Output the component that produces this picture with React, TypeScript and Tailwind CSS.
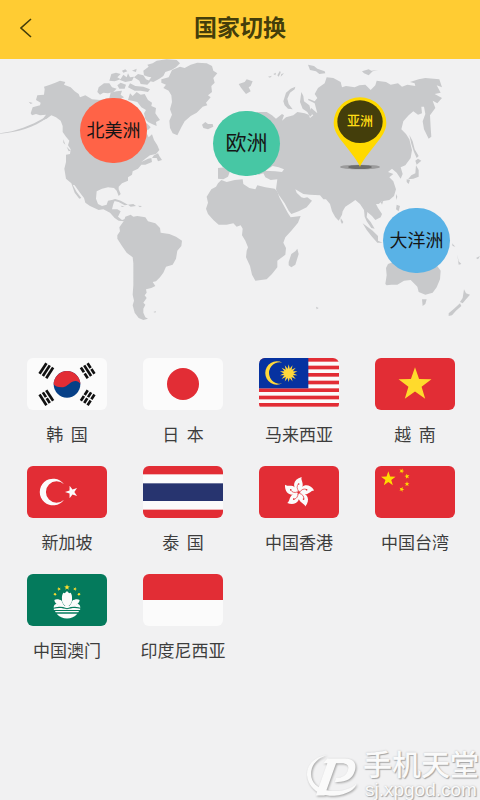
import type { ReactNode } from "react";

const FONT = "font-['Noto_Sans_CJK_SC','Noto_Sans',sans-serif]";
const RED = "#e22d35";
const STAR =
  "M0,-10 L2.35,-3.24 L9.51,-3.09 L3.8,1.24 L5.88,8.09 L0,4 L-5.88,8.09 L-3.8,1.24 L-9.51,-3.09 L-2.35,-3.24Z";

function Star({ x, y, r, fill, turn = 0 }: { x: number; y: number; r: number; fill: string; turn?: number }) {
  return <path d={STAR} fill={fill} transform={`translate(${x} ${y}) rotate(${turn}) scale(${r / 10})`} />;
}

function Trigram({ x, y, turn, broken }: { x: number; y: number; turn: number; broken: boolean[] }) {
  return (
    <g transform={`translate(${x} ${y}) rotate(${turn})`} stroke="#111" strokeWidth="8">
      {broken.map((b, i) => (
        <path key={i} d={b ? `M-19,${i * 12 - 12} H-2 M2,${i * 12 - 12} H19` : `M-19,${i * 12 - 12} H19`} />
      ))}
    </g>
  );
}

function Flag({ children }: { children: ReactNode }) {
  return (
    <svg viewBox="0 0 240 156" className="h-[52px] w-20 rounded-md" aria-hidden="true">
      {children}
    </svg>
  );
}

const korea = (
  <>
    <rect width="240" height="156" fill="#fbfbfb" />
    <circle cx="120" cy="79" r="40" fill="#064087" />
    <path d="M80,79 A40,40 0 0 1 160,79 C158,70 146,66 136,71 C124,77 118,88 104,88 C92,88 84,84 80,79Z" fill={RED} />
    <Trigram x={58} y={38} turn={-57} broken={[false, false, false]} />
    <Trigram x={182} y={38} turn={57} broken={[true, false, true]} />
    <Trigram x={58} y={119} turn={57} broken={[false, true, false]} />
    <Trigram x={182} y={119} turn={-57} broken={[true, true, true]} />
  </>
);

const japan = (
  <>
    <rect width="240" height="156" fill="#fbfbfb" />
    <circle cx="120" cy="78" r="48" fill={RED} />
  </>
);

const malaysia = (
  <>
    <rect width="240" height="146" fill="#fbfbfb" />
    {[0, 23, 45, 68, 91, 113, 135].map((y) => (
      <rect key={y} y={y} width="240" height="11" fill={RED} />
    ))}
    <rect width="148" height="91" fill="#0632a0" />
    <path d="M70,14 A35,35 0 1 0 70,76 A32,32 0 1 1 70,14Z" fill="#ffd83b" />
    <g transform="translate(89 46)" fill="#ffd83b">
      <circle r="14" />
      {Array.from({ length: 14 }, (_, i) => (
        <path key={i} d="M-4,-10 L0,-27 L4,-10Z" transform={`rotate(${(i * 360) / 14})`} />
      ))}
    </g>
  </>
);

const vietnam = (
  <>
    <rect width="240" height="156" fill={RED} />
    <Star x={120} y={80} r={52} fill="#ffda2c" />
  </>
);

const crescent = (
  <>
    <rect width="240" height="156" fill={RED} />
    <path d="M111,55 A40,40 0 1 0 111,101 A32,32 0 1 1 111,55Z" fill="#fbfbfb" />
    <Star x={134} y={78} r={20} fill="#fbfbfb" turn={-18} />
  </>
);

const thailand = (
  <>
    <rect width="240" height="156" fill={RED} />
    <rect y="25" width="240" height="106" fill="#fbfbfb" />
    <rect y="52" width="240" height="53" fill="#27346f" />
  </>
);

const hongkong = (
  <>
    <rect width="240" height="156" fill={RED} />
    {[0, 72, 144, 216, 288].map((a) => (
      <g key={a} transform={`translate(119 79) rotate(${a})`}>
        <path d="M0,-3 C-20,-12 -19,-39 9,-46 C5,-37 17,-27 10,-13 C8,-8 4,-4 0,-3Z" fill="#fbfbfb" />
        <path d="M0,-4 C-6,-11 -6,-19 -1,-25" fill="none" stroke={RED} strokeWidth="2" />
        <circle cx="0" cy="-25" r="2.5" fill={RED} />
      </g>
    ))}
  </>
);

const china = (
  <>
    <rect width="240" height="156" fill={RED} />
    <Star x={40} y={39} r={23} fill="#ffdc00" />
    <Star x={80} y={15} r={8} fill="#ffdc00" turn={20} />
    <Star x={96} y={31} r={8} fill="#ffdc00" turn={-10} />
    <Star x={96} y={54} r={8} fill="#ffdc00" />
    <Star x={80} y={70} r={8} fill="#ffdc00" turn={20} />
  </>
);

const macau = (
  <>
    <rect width="240" height="156" fill="#047a5c" />
    <Star x={120} y={40} r={9} fill="#ffdf2e" />
    <Star x={96} y={45} r={6} fill="#ffdf2e" turn={-20} />
    <Star x={144} y={45} r={6} fill="#ffdf2e" turn={20} />
    <Star x={84} y={61} r={6} fill="#ffdf2e" turn={-40} />
    <Star x={156} y={61} r={6} fill="#ffdf2e" turn={40} />
    <g fill="#fbfbfb">
      <path d="M120,100 C108,92 104,84 105,76 C104,68 106,60 109,56 L114,58 C116,54 118,53 120,52 C122,53 124,54 126,58 L131,56 C134,60 136,68 135,76 C136,84 132,92 120,100Z" />
      <path d="M117,100 C100,98 84,92 82,78 C88,74 98,76 104,80 C106,88 112,96 117,100Z M123,100 C140,98 156,92 158,78 C152,74 142,76 136,80 C134,88 128,96 123,100Z" />
      <path d="M80,101 C80,94 84,89 90,90 C98,98 142,98 150,90 C156,89 160,94 160,101 C140,96 130,98 120,103 C110,98 100,96 80,101Z" />
      <path d="M80,104 C96,100 108,102 120,106 C132,102 144,100 160,104 L159,108 H81Z" />
      <path d="M84,111 H156 L154,115 H86Z M89,119 H151 A40,40 0 0 1 89,119Z" />
    </g>
  </>
);

const indonesia = (
  <>
    <rect width="240" height="156" fill="#fbfbfb" />
    <rect width="240" height="78" fill={RED} />
  </>
);

const countries: { name: string; flag: ReactNode }[] = [
  { name: "韩  国", flag: korea },
  { name: "日  本", flag: japan },
  { name: "马来西亚", flag: malaysia },
  { name: "越  南", flag: vietnam },
  { name: "新加坡", flag: crescent },
  { name: "泰  国", flag: thailand },
  { name: "中国香港", flag: hongkong },
  { name: "中国台湾", flag: china },
  { name: "中国澳门", flag: macau },
  { name: "印度尼西亚", flag: indonesia },
];

function WorldMap() {
  return (
    <svg viewBox="0 177 1440 843" className="block w-full" aria-hidden="true">
      <g fill="#c8c9cb">
        {/* North America */}
        <path d="M92,340 L98,322 L120,316 L122,308 L108,300 L112,286 L132,284 L134,268 L132,260 L150,254 L166,248 L180,242 L196,246 L192,254 L212,262 L224,274 L236,282 L240,292 L256,286 L276,298 L300,300 L340,292 L440,400 L446,412 L456,403 L462,420 L472,436 L478,450 L468,462 L450,466 L436,476 L424,486 L444,476 L454,474 L456,486 L436,494 L424,494 L414,506 L398,514 L396,524 L384,532 L384,542 L366,550 L356,560 L356,568 L362,582 L356,588 L350,572 L342,564 L324,562 L306,566 L290,574 L288,596 L294,612 L306,618 L320,614 L324,602 L346,598 L340,612 L336,628 L352,628 L362,634 L354,650 L366,660 L378,656 L372,664 L356,662 L344,654 L330,638 L310,628 L296,630 L270,618 L256,608 L252,594 L240,578 L224,556 L218,554 L230,576 L244,594 L238,596 L224,578 L214,550 L198,536 L193,506 L198,486 L198,464 L210,462 L212,448 L204,436 L208,422 L198,410 L188,396 L188,378 L182,362 L168,352 L154,346 L140,356 L124,362 L138,344 L120,346 L108,342 L96,346Z" />
        <path d="M0,400 C50,394 90,378 136,352 L140,354 C104,382 50,398 0,401Z M86,305 L98,309 L92,312Z M190,418 L196,434 L190,428Z M200,440 L212,452 L206,454Z M462,466 L474,460 L478,468 L486,480 L474,484 L470,474 L456,474Z" />
        {/* Arctic islands */}
        <path d="M292,276 L296,262 L312,250 L328,250 L336,262 L350,266 L340,276 L324,280 L310,278 L300,284Z M328,294 L332,278 L350,274 L366,272 L362,284 L372,292 L360,298Z M328,242 L334,222 L348,218 L362,222 L352,232 L362,238 L344,244Z M360,240 L370,224 L380,232 L384,220 L390,232 L402,230 L396,242 L376,246Z M352,256 L362,248 L378,254 L374,266 L358,266Z M384,262 L390,250 L406,258 L430,260 L450,268 L444,276 L422,272 L404,272Z M396,212 L410,206 L408,216Z M402,232 L414,222 L430,226 L438,238 L452,244 L442,254 L422,252 L418,242Z M366,212 L376,208 L382,214 L370,218Z" />
        <path d="M432,226 L430,212 L446,200 L442,194 L458,190 L470,182 L500,178 L530,180 L540,190 L528,202 L514,210 L496,216 L490,228 L478,236 L460,246 L446,242 L454,232 L444,230Z" />
        <path d="M384,300 L390,280 L398,288 L410,276 L422,284 L434,282 L444,300 L456,308 L454,318 L468,324 L466,340 L474,352 L480,360 L468,366 L470,378 L456,372 L444,366 L436,358 L432,340 L438,330 L424,322 L412,306 L396,302Z M426,372 L440,370 L452,382 L444,390 L430,386Z" />
        {/* Greenland and Iceland */}
        <path d="M484,238 L506,232 L516,210 L540,200 L554,204 L572,194 L592,188 L620,190 L636,198 L640,212 L652,220 L640,234 L644,248 L634,258 L636,276 L624,286 L632,292 L618,308 L622,316 L608,320 L590,338 L572,348 L554,364 L544,382 L532,406 L518,400 L510,384 L508,362 L516,344 L510,328 L516,306 L514,286 L506,272 L490,264 L498,254 L484,248Z M606,374 L616,366 L624,372 L638,372 L640,380 L624,388 L610,384Z" />
        {/* Caribbean */}
        <path d="M330,604 L346,597 L362,602 L384,614 L374,616 L356,606 L340,602Z M384,614 L400,612 L408,618 L392,620Z M414,617 L426,618 L420,622Z M362,617 L374,619 L366,621Z" />
        {/* South America */}
        <path d="M372,662 L376,650 L392,644 L400,650 L412,648 L436,652 L444,664 L466,670 L480,684 L482,698 L508,702 L528,710 L546,722 L544,738 L532,752 L528,776 L518,794 L498,800 L490,818 L480,832 L468,844 L458,846 L466,858 L454,864 L438,868 L440,878 L434,886 L440,894 L430,908 L436,914 L430,926 L430,938 L436,952 L444,956 L430,960 L416,954 L404,938 L398,916 L402,902 L398,884 L400,856 L400,790 L398,772 L380,758 L366,738 L352,716 L352,706 L360,694 L358,682Z M460,936 L468,933 L466,938Z" />
        {/* Africa */}
        <path d="M654,550 L664,540 L680,546 L704,540 L728,538 L730,552 L748,564 L766,568 L772,556 L796,562 L824,566 L832,574 L838,592 L850,614 L864,640 L872,652 L902,648 L894,668 L874,692 L856,712 L850,728 L858,744 L856,764 L832,782 L832,802 L816,822 L800,838 L766,842 L756,824 L750,798 L738,772 L740,752 L744,742 L736,722 L726,706 L728,686 L722,676 L710,680 L700,670 L680,674 L656,674 L640,660 L624,642 L618,626 L624,608 L620,590 L634,568 L648,560Z M866,786 L874,762 L886,754 L892,746 L896,762 L886,794 L874,802 L866,796Z" />
        {/* Europe and Asia */}
        <path d="M654,504 L676,502 L700,490 L740,400 L770,336 L800,336 L816,346 L828,356 L846,342 L852,346 L846,362 L858,352 L880,346 L892,336 L914,340 L926,344 L930,354 L940,346 L928,336 L934,324 L952,340 L944,310 L924,300 L926,296 L944,304 L952,294 L944,282 L954,264 L974,250 L980,232 L1000,234 L1022,246 L1026,262 L1038,258 L1064,262 L1078,256 L1096,254 L1112,270 L1126,256 L1130,242 L1158,246 L1172,254 L1194,250 L1206,260 L1222,254 L1246,258 L1244,250 L1230,246 L1256,238 L1276,234 L1318,238 L1326,262 L1310,256 L1322,278 L1304,282 L1326,294 L1312,310 L1298,302 L1306,324 L1290,346 L1292,382 L1294,410 L1286,416 L1272,388 L1268,364 L1276,342 L1272,320 L1264,320 L1266,340 L1254,344 L1240,334 L1226,346 L1210,364 L1204,388 L1218,402 L1228,418 L1236,450 L1232,474 L1216,496 L1202,502 L1208,522 L1202,536 L1190,518 L1176,506 L1164,516 L1180,522 L1168,532 L1180,544 L1188,568 L1182,588 L1168,600 L1146,604 L1136,612 L1128,612 L1134,624 L1146,642 L1142,652 L1126,660 L1116,648 L1102,636 L1100,652 L1112,666 L1124,686 L1114,684 L1100,664 L1094,650 L1092,630 L1080,612 L1066,600 L1052,610 L1036,620 L1028,634 L1026,644 L1016,662 L1006,652 L996,634 L990,612 L978,598 L970,598 L960,586 L930,584 L910,582 L886,568 L890,578 L904,592 L912,594 L922,592 L936,602 L920,622 L896,634 L874,642 L866,632 L854,610 L836,584 L828,568 L832,538 L812,540 L796,532 L790,520 L776,524 L764,512 L750,526 L740,518 L690,514 L684,530 L670,538 L654,536Z" />
        {/* Northern islands */}
        <path d="M716,252 L734,246 L740,238 L758,244 L752,258 L746,262 L752,274 L738,282 L730,272 L722,262Z M804,230 L816,227 L810,233Z M820,222 L828,218 L826,226Z M832,226 L840,212 L842,218 L836,230Z M844,222 L852,220 L842,230Z M924,194 L942,198 L952,206 L974,214 L976,220 L958,222 L948,214 L930,210Z M1086,214 L1106,208 L1114,212 L1134,210 L1118,214 L1106,226 L1092,220Z M850,304 L858,278 L872,266 L886,260 L884,268 L870,278 L862,296 L866,312 L878,328 L864,326 L854,316Z M904,276 L910,288 L912,304 L928,316 L936,344 L930,350 L922,336 L908,326 L900,306Z" />
        {/* East Asian islands */}
        <path d="M1228,404 L1238,424 L1244,448 L1256,468 L1250,474 L1242,456 L1234,432Z M1246,482 L1254,476 L1264,482 L1250,494Z M1248,496 L1256,510 L1256,530 L1240,536 L1224,538 L1234,526 L1246,520Z M1220,538 L1230,540 L1226,552 L1220,546Z M1188,582 L1192,590 L1188,600Z M1142,606 L1150,602 L1146,614Z M1190,614 L1200,618 L1196,634 L1188,628Z M1022,654 L1030,666 L1026,672 L1022,664Z M1088,670 L1102,680 L1118,692 L1134,708 L1134,722 L1148,728 L1132,728 L1116,710 L1100,690Z" />
        {/* Australia and New Zealand */}
        <path d="M1156,852 L1160,826 L1158,804 L1164,792 L1190,782 L1300,782 L1310,796 L1322,812 L1320,838 L1310,862 L1298,878 L1276,884 L1256,876 L1252,860 L1244,852 L1232,840 L1212,842 L1192,854 L1174,854 L1160,856Z M1266,898 L1280,898 L1276,912 L1268,918Z M1392,868 L1398,880 L1410,884 L1398,898 L1388,910 L1380,906 L1388,894Z M1346,940 L1362,926 L1380,910 L1384,918 L1368,932 L1356,946 L1346,948Z M1372,764 L1376,784 L1384,792 L1376,794Z M1356,730 L1366,740 L1358,738Z M1428,774 L1440,768 L1434,778Z M948,920 L956,924 L950,928Z" />
      </g>
      {/* Black Sea */}
      <path d="M796,512 L818,498 L836,502 L852,508 L846,516 L826,514Z" fill="#f1f1f2" />
    </svg>
  );
}

const continents = [
  { name: "北美洲", place: "left-[80px] top-[39px] bg-[#ff6347] text-lg" },
  { name: "欧洲", place: "left-[213px] top-[52px] bg-[#47c7a4] text-[21px]" },
  { name: "大洋洲", place: "left-[383px] top-[149px] bg-[#59b2e6] text-lg" },
];

export default function App() {
  return (
    <main className={`relative min-h-screen overflow-hidden bg-[#f1f1f2] text-[#3d3d3d] ${FONT}`}>
      <header className="grid h-[59px] grid-cols-[54px_1fr_54px] items-center bg-[#ffcc33] pb-1">
        <button aria-label="返回" className="flex h-full items-center pl-5 text-[#443e0b]">
          <svg viewBox="0 0 12 20" className="h-5 w-3" fill="none" stroke="currentColor" strokeWidth="1.6">
            <path d="M11,1 L1,10 L11,19" />
          </svg>
        </button>
        <h1 className="pb-1 text-center text-[23px] leading-8 font-semibold text-[#443e0b]">国家切换</h1>
      </header>

      <section className="relative" aria-label="世界地图">
        <WorldMap />
        {continents.map((c) => (
          <button
            key={c.name}
            className={`absolute flex h-[65px] w-[67px] items-center justify-center rounded-full pb-[3px] whitespace-nowrap text-[#151515] ${c.place}`}
          >
            {c.name}
          </button>
        ))}
        <button className="absolute top-[38px] left-[333px] h-[73px] w-[54px] text-[13px] font-medium text-[#ffdc14]">
          <svg viewBox="0 0 162 219" className="absolute inset-0 h-full w-full" aria-hidden="true">
            <ellipse cx="81" cy="210" rx="60" ry="7" fill="#9b9b9c" />
            <ellipse cx="81" cy="210" rx="36" ry="6" fill="#6d6d6d" />
            <path d="M81,210 C77,196 54,168 34,142 C16,120 2,100 2,78 A79,77 0 0 1 160,78 C160,100 146,120 128,142 C108,168 85,196 81,210Z" fill="#ffd900" />
            <ellipse cx="81" cy="74" rx="68" ry="64" fill="#443e0b" />
          </svg>
          <span className="absolute inset-x-0 top-3 leading-[22px]">亚洲</span>
        </button>
      </section>

      <section className="grid grid-cols-4 gap-y-5 pt-[18px] pr-[7px] pl-[9px]" aria-label="国家和地区">
        {countries.map((c) => (
          <button key={c.name} className="flex flex-col items-center gap-3">
            <Flag>{c.flag}</Flag>
            <span className="text-[17px] leading-6 whitespace-pre">{c.name}</span>
          </button>
        ))}
      </section>

      <footer className="absolute right-0 bottom-0 flex items-end text-[#fafafa] [text-shadow:1px_1px_1px_#a5a5a5,0_0_2px_#bdbdbd]">
        <svg viewBox="0 0 160 140" className="h-12 w-[54px] drop-shadow-[1px_1px_1px_#a0a0a0]" aria-hidden="true">
          <path
            d="M66,8 C28,12 4,38 6,68 C8,92 24,114 50,124 C96,138 150,116 152,92 C136,110 96,120 64,112 C36,106 18,88 18,64 C18,36 38,16 66,8Z"
            fill="#fafafa"
          />
          <path
            d="M66,18 H118 C154,18 154,46 144,64 C134,84 114,88 88,88 L92,76 C112,76 122,68 127,54 C132,38 124,32 108,32 H92 L58,128 H32 L66,32 H54Z"
            fill="#fafafa"
          />
        </svg>
        <div className="flex flex-col pr-px pl-1">
          <span className="text-[29px] leading-[34px] font-medium">手机天堂</span>
          <span className="pl-0.5 font-['Liberation_Sans',sans-serif] text-[19px] leading-5">sj.xpgod.com</span>
        </div>
      </footer>
    </main>
  );
}
